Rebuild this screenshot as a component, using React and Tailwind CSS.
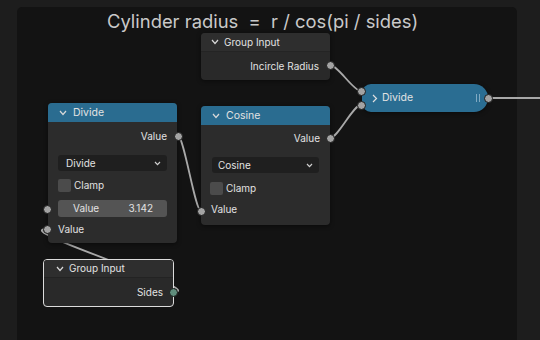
import React from "react";

function ChevronDown() {
  return (
    <svg width="8" height="6" viewBox="0 0 8 6" className="shrink-0">
      <polyline points="1,1 4,4.5 7,1" fill="none" stroke="#d8d8d8" strokeWidth="1.2" />
    </svg>
  );
}

function SmallChevron() {
  return (
    <svg width="7" height="5" viewBox="0 0 7 5" className="shrink-0">
      <polyline points="1,1 3.5,3.6 6,1" fill="none" stroke="#cfcfcf" strokeWidth="1.2" />
    </svg>
  );
}

function Socket({ className, green }) {
  return (
    <span
      className={
        "absolute w-[9px] h-[9px] -ml-[4.5px] -mt-[4.5px] rounded-full border border-[#1b1b1b] " +
        (green ? "bg-[#5f8d7c] " : "bg-[#a3a3a3] ") +
        className
      }
    />
  );
}

export default function App() {
  return (
    <div className="relative w-[540px] h-[340px] overflow-hidden bg-[#1d1d1d] pl-[17px] pt-[7px] font-[Inter,'Liberation_Sans',sans-serif] text-[#e2e2e2]">
      {/* frame */}
      <div className="w-[500px] h-[333px] bg-[#131313] rounded-t-[5px] pl-[90px] pt-[5px]">
        <div className="text-[18.4px] leading-[19px] text-[#c9c9c9] whitespace-pre">
          {"Cylinder radius  =  r / cos(pi / sides)"}
        </div>
      </div>

      {/* links */}
      <svg className="absolute left-0 top-0" width="540" height="340" viewBox="0 0 540 340">
        <g fill="none" stroke="#a8a8a8" strokeWidth="1.8" strokeLinecap="round">
          <path d="M330,65 C338,65 353,91 361,91" />
          <path d="M330,138 C338,138 353,105 361,105" />
          <path d="M178,136 C184,136 195,211 201,211" />
          <path d="M173,292 C213,292 7,229 47,229" />
          <path d="M488,98 L545,98" />
        </g>
      </svg>

      {/* Group Input (top) */}
      <div className="absolute left-[201px] top-[33px] w-[129px] h-[47px] rounded-[4px] bg-[#292929] flex flex-col overflow-hidden shadow-[0_1px_4px_rgba(0,0,0,0.5)]">
        <div className="h-[19px] bg-[#2e2e2e] border-b border-[#242424] flex items-center pl-[10px] gap-[5px] text-[10px]">
          <ChevronDown />
          <span>Group Input</span>
        </div>
        <div className="flex-1 flex items-center justify-end pr-[11px] text-[10px]">Incircle Radius</div>
      </div>
      <Socket className="left-[330px] top-[65px]" />

      {/* Divide collapsed */}
      <div className="absolute left-[362px] top-[84px] w-[126px] h-[28px] rounded-l-[9px] rounded-r-[14px] bg-[#2a6d92] flex items-center pl-[10px] pr-[8px] text-[10.5px] shadow-[0_1px_4px_rgba(0,0,0,0.5)]">
        <svg width="6" height="9" viewBox="0 0 6 9" className="shrink-0">
          <polyline points="1,1 4.5,4.5 1,8" fill="none" stroke="#e0e0e0" strokeWidth="1.2" />
        </svg>
        <span className="ml-[4px]">Divide</span>
        <span className="ml-auto flex gap-[2px]">
          <span className="w-[1px] h-[8px] bg-[#7fa9c2]" />
          <span className="w-[1px] h-[8px] bg-[#7fa9c2]" />
        </span>
      </div>
      <Socket className="left-[361px] top-[91px]" />
      <Socket className="left-[361px] top-[105px]" />
      <Socket className="left-[488px] top-[98px]" />

      {/* Divide node */}
      <div className="absolute left-[48px] top-[103px] w-[129px] h-[140px] rounded-[4px] bg-[#2c2c2c] flex flex-col overflow-hidden shadow-[0_1px_4px_rgba(0,0,0,0.5)] text-[10px]">
        <div className="h-[19px] bg-[#2a6c90] flex items-center pl-[11px] gap-[6px] text-[10.5px]">
          <ChevronDown />
          <span>Divide</span>
        </div>
        <div className="h-[28px] flex items-center justify-end pr-[10px] pt-[1px]">Value</div>
        <div className="h-[5px]" />
        <div className="mx-[10px] h-[16px] rounded-[3px] bg-[#1f1f1f] flex items-center pl-[8px] pr-[6px]">
          <span>Divide</span>
          <span className="ml-auto"><SmallChevron /></span>
        </div>
        <div className="h-[8px]" />
        <div className="mx-[10px] h-[13px] flex items-center gap-[3px]">
          <span className="w-[13px] h-[13px] rounded-[2px] bg-[#4b4b4b]" />
          <span>Clamp</span>
        </div>
        <div className="h-[8px]" />
        <div className="mx-[10px] h-[17px] rounded-[3px] bg-[#545454] flex items-center pl-[15px] pr-[14px]">
          <span>Value</span>
          <span className="ml-auto">3.142</span>
        </div>
        <div className="h-[20px] flex items-center pl-[10px] pt-[4px]">Value</div>
      </div>
      <Socket className="left-[178px] top-[136px]" />
      <Socket className="left-[47px] top-[209px]" />
      <Socket className="left-[47px] top-[229px]" />

      {/* Cosine node */}
      <div className="absolute left-[201px] top-[106px] w-[129px] h-[119px] rounded-[4px] bg-[#2c2c2c] flex flex-col overflow-hidden shadow-[0_1px_4px_rgba(0,0,0,0.5)] text-[10px]">
        <div className="h-[19px] bg-[#2a6c90] flex items-center pl-[11px] gap-[6px] text-[10.5px]">
          <ChevronDown />
          <span>Cosine</span>
        </div>
        <div className="h-[26px] flex items-center justify-end pr-[10px]">Value</div>
        <div className="h-[6px]" />
        <div className="mx-[11px] h-[16px] rounded-[3px] bg-[#1f1f1f] flex items-center pl-[6px] pr-[6px]">
          <span>Cosine</span>
          <span className="ml-auto"><SmallChevron /></span>
        </div>
        <div className="h-[9px]" />
        <div className="ml-[9px] h-[13px] flex items-center gap-[3px]">
          <span className="w-[13px] h-[13px] rounded-[2px] bg-[#4b4b4b]" />
          <span>Clamp</span>
        </div>
        <div className="h-[22px] flex items-center pl-[10px] pt-[6px]">Value</div>
      </div>
      <Socket className="left-[330px] top-[138px]" />
      <Socket className="left-[201px] top-[211px]" />

      {/* Group Input (bottom, selected) */}
      <div className="absolute left-[43px] top-[259px] w-[131px] h-[48px] rounded-[4px] bg-[#292929] border border-[#dcdcdc] flex flex-col overflow-hidden text-[10px]">
        <div className="h-[18px] bg-[#2e2e2e] border-b border-[#232323] flex items-center pl-[12px] gap-[5px]">
          <ChevronDown />
          <span>Group Input</span>
        </div>
        <div className="flex-1 flex items-center justify-end pr-[10px]">Sides</div>
      </div>
      <Socket className="left-[173px] top-[292px]" green />
    </div>
  );
}
